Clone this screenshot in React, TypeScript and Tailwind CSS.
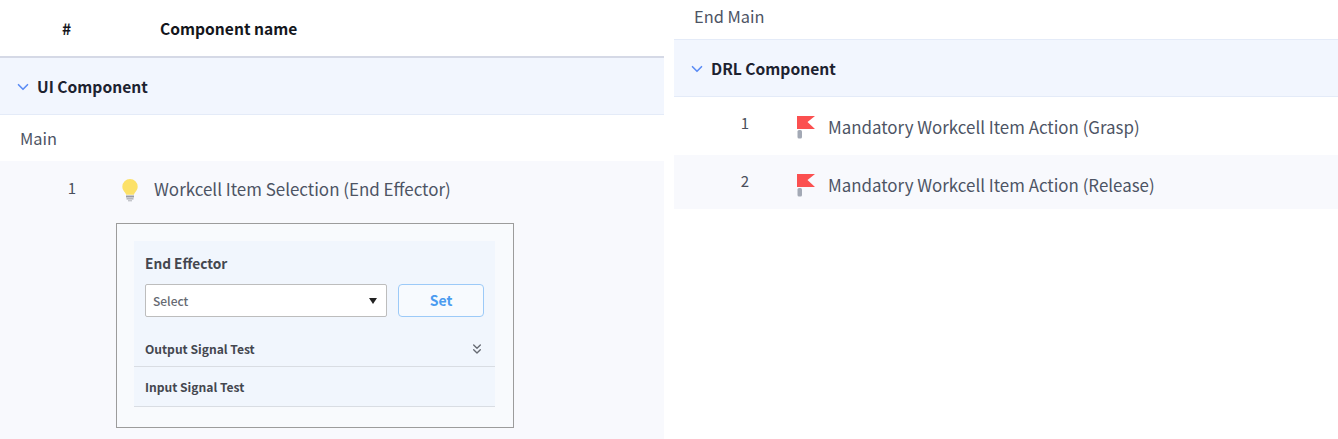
import { ChevronDown, ChevronsDown } from 'lucide-react'

const FONT = 'font-["Noto_Sans_CJK_KR","Noto_Sans",sans-serif]'

function Bulb() {
  return (
    <svg width="18" height="24" viewBox="0 0 18 24" className="shrink-0">
      <path d="M9 1a7.7 7.7 0 0 0-7.7 7.7c0 3 1.8 4.6 3 6.2.5.7.7 1.2.8 1.8h7.8c.1-.6.3-1.1.8-1.8 1.2-1.6 3-3.2 3-6.2A7.7 7.7 0 0 0 9 1z" fill="#fce168" />
      <rect x="5" y="17.5" width="8" height="2" fill="#9a9ca3" />
      <rect x="5.5" y="20" width="7" height="1.6" fill="#b5b7bd" />
      <rect x="7" y="22" width="4" height="1.4" fill="#c4c6cb" />
    </svg>
  )
}

function Flag() {
  return (
    <svg width="20" height="25" viewBox="0 0 20 25" className="shrink-0">
      <path d="M1 1h18l-7.5 6 7.5 7H1z" fill="#fb5050" />
      <rect x="1.5" y="15" width="4.5" height="8.5" rx="1.5" fill="#a3a9b5" />
    </svg>
  )
}

function GroupRow({ label }: { label: string }) {
  return (
    <div className="flex h-[57px] items-center gap-[5px] border-b border-[#e4ebf8] bg-[#f2f6fe] pl-[14px] pt-[2px]">
      <ChevronDown className="h-[18px] w-[18px] text-[#5b8cf5]" strokeWidth={2.2} />
      <span className="text-[15.6px] font-bold text-[#1d2230]">{label}</span>
    </div>
  )
}

function ItemRow({ index, label, height, shaded }: { index: number; label: string; height: string; shaded?: boolean }) {
  return (
    <div className={`flex items-start ${height} ${shaded ? 'bg-[#f8f9fd]' : 'bg-white'}`}>
      <span className="mt-[16px] w-[75px] text-right text-[15px] leading-5 text-[#4a4f5c]">{index}</span>
      <div className="ml-[47px] mt-[18px]"><Flag /></div>
      <span className="ml-[12px] mt-[18px] text-[16.9px] leading-6 text-[#4d5464]">{label}</span>
    </div>
  )
}

function EndEffectorCard() {
  return (
    <div className="ml-[116px] mt-[21px] h-[205px] w-[398px] border border-[#9c9c9c] bg-[#f8fafd] pl-[17px] pt-[17px]">
      <div className="h-[166px] w-[361px] bg-[#f1f6fd] px-[11px]">
        <p className="pt-[12px] text-[13.7px] leading-5 font-bold text-[#44474f]">End Effector</p>
        <div className="mt-[11px] flex gap-[11px]">
          <div className="flex h-[33px] w-[243px] items-center justify-between rounded-[2px] border border-[#bdbdbd] bg-white pl-[7px] pr-[9px]">
            <span className="text-[12px] font-medium text-[#666a72]">Select</span>
            <span className="h-0 w-0 border-x-[4px] border-t-[6px] border-x-transparent border-t-[#222]" />
          </div>
          <button className="h-[33px] w-[86px] rounded-[4px] border border-[#9ccaf8] bg-[#f7fafe] text-[14px] font-bold text-[#4a9bf0]">Set</button>
        </div>
        <div className="-mx-[11px] flex h-[50px] items-center justify-between border-b border-[#d9dde3] px-[11px] pt-[15px]">
          <span className="text-[12.1px] font-bold text-[#44474f]">Output Signal Test</span>
          <ChevronsDown className="-mr-px h-[16px] w-[16px] text-[#666a72]" strokeWidth={2} />
        </div>
        <div className="-mx-[11px] flex h-[40px] items-center border-b border-[#d9dde3] px-[11px] pt-[2px]">
          <span className="text-[12.1px] font-bold text-[#44474f]">Input Signal Test</span>
        </div>
      </div>
    </div>
  )
}

export default function App() {
  return (
    <div className={`flex h-[439px] w-[1338px] justify-between overflow-hidden bg-white ${FONT}`}>
      {/* left half */}
      <div className="flex w-[664px] flex-col">
        <div className="flex h-[58px] items-center border-b-2 border-[#d5d9e6] pt-[2px] text-[15.6px] font-bold text-[#14161c]">
          <span className="ml-[62px] w-[98px]">#</span>
          <span>Component name</span>
        </div>
        <GroupRow label="UI Component" />
        <div className="flex h-[46px] items-center pl-[20px] text-[16.4px] text-[#4d5464]">Main</div>
        <div className="flex-1 bg-[#f8f9fd]">
          <div className="flex h-[41px] items-start">
            <span className="mt-[17px] w-[76px] text-right text-[15px] leading-5 text-[#4a4f5c]">1</span>
            <div className="ml-[45px] mt-[17px]"><Bulb /></div>
            <span className="ml-[15px] mt-[16px] text-[16.95px] leading-6 text-[#4d5464]">Workcell Item Selection (End Effector)</span>
          </div>
          <EndEffectorCard />
        </div>
      </div>

      {/* right half */}
      <div className="flex w-[664px] flex-col">
        <div className="flex h-[40px] items-center border-b border-[#e4ebf8] pb-[7px] pl-[20px] text-[16.4px] text-[#4d5464]">End Main</div>
        <GroupRow label="DRL Component" />
        <ItemRow index={1} label="Mandatory Workcell Item Action (Grasp)" height="h-[58px]" />
        <ItemRow index={2} label="Mandatory Workcell Item Action (Release)" height="h-[54px]" shaded />
      </div>
    </div>
  )
}
